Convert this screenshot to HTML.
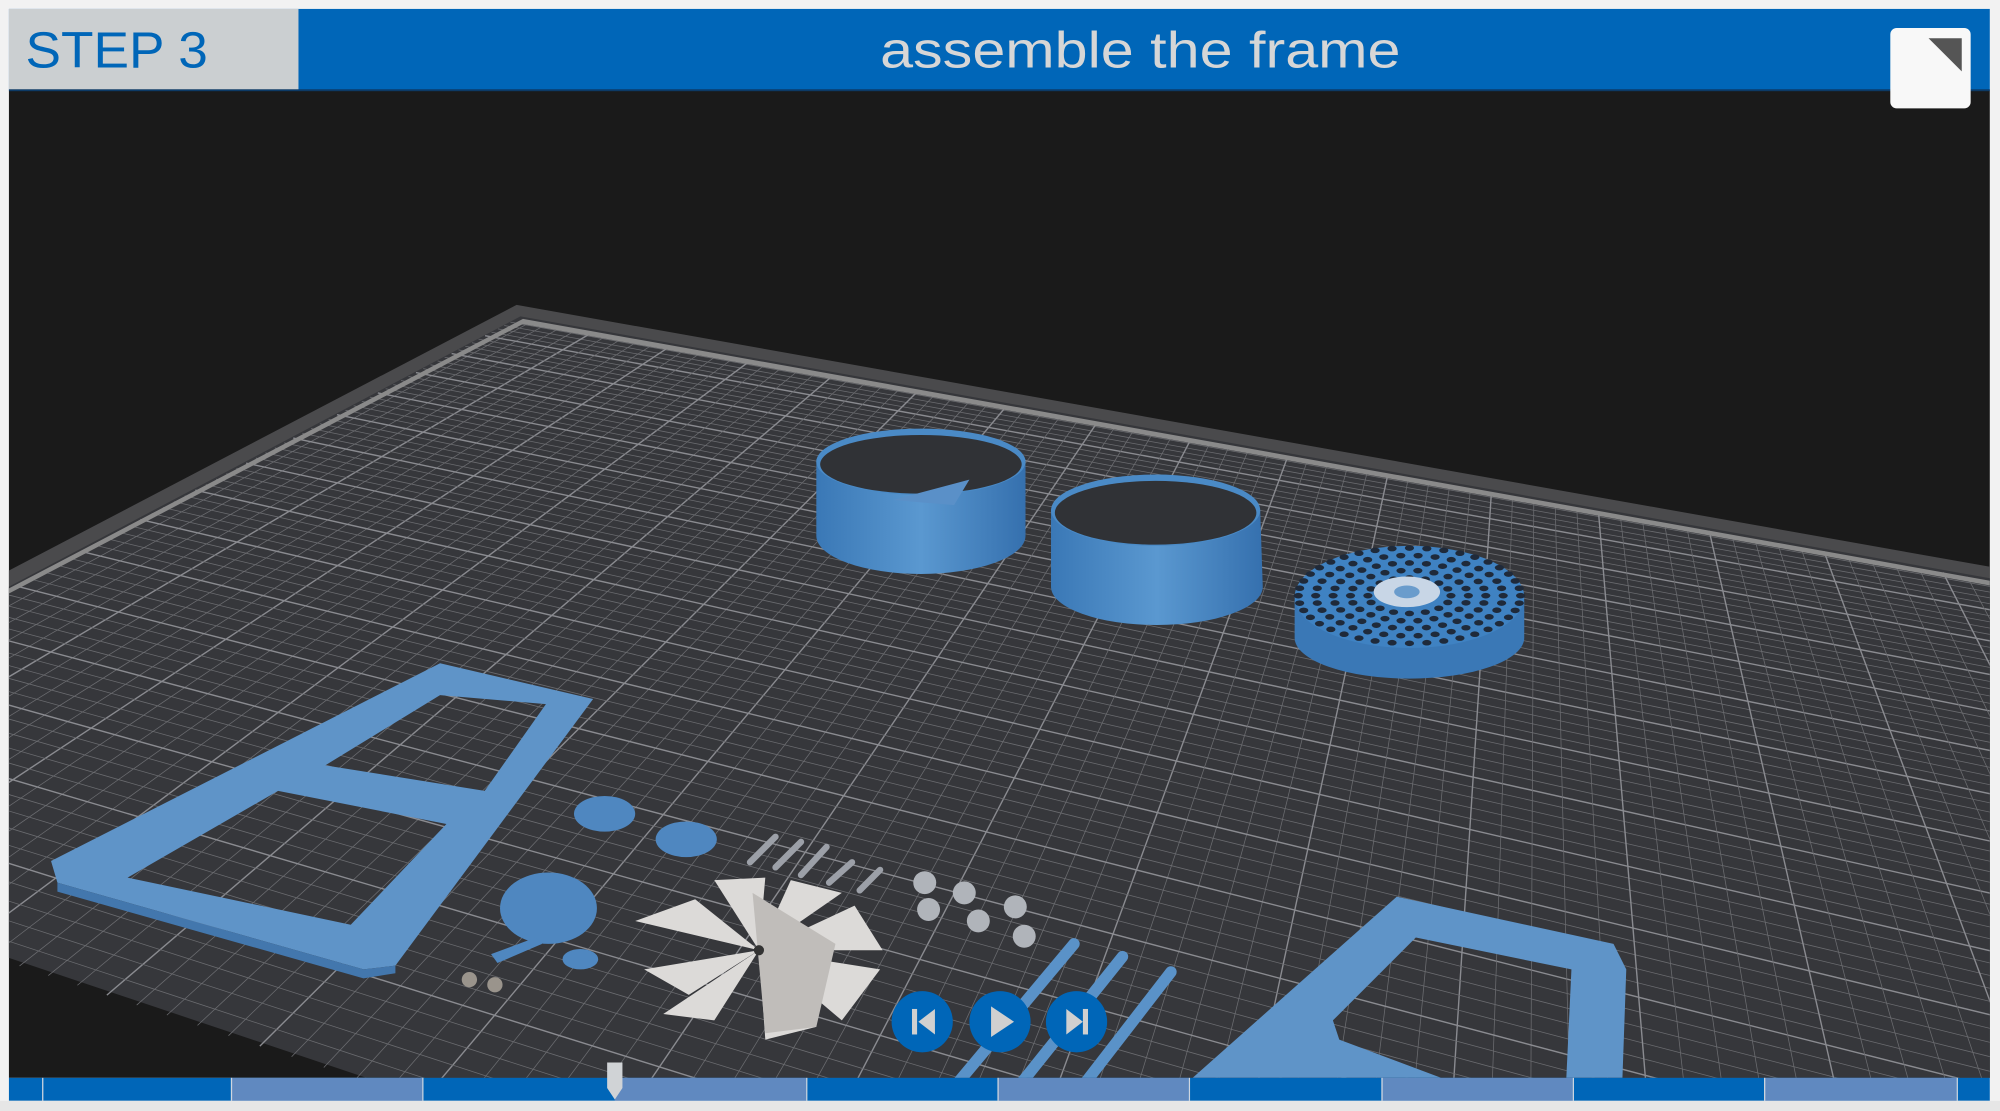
<!DOCTYPE html>
<html><head><meta charset="utf-8"><style>
html,body{margin:0;padding:0;background:#f2f2f2;width:2000px;height:1111px;overflow:hidden;position:relative}
svg{position:absolute;left:0;top:0;display:block}
.t{font-family:"Liberation Sans",sans-serif}
</style></head><body>
<svg id="s" width="2000" height="1111" viewBox="0 0 1568 871" preserveAspectRatio="none">
<defs>
<clipPath id="vp"><rect x="7" y="71" width="1553" height="774"/></clipPath>
<linearGradient id="rg" x1="0" x2="1"><stop offset="0" stop-color="#3a78b6"/><stop offset=".5" stop-color="#5a98d0"/><stop offset="1" stop-color="#3570ae"/></linearGradient>
</defs>
<rect x="0" y="0" width="1568" height="871" fill="#f2f2f2"/>
<rect x="7" y="71" width="1553" height="774" fill="#1a1a1a"/>
<g clip-path="url(#vp)">
<polygon points="405,239 1620,455 2300,1500 -342,630" fill="#4a4a4c"/>
<polygon points="408,248 1620,464 2300,1520 -330,638" fill="#36373b"/>
<g id="grid" stroke="#6b6c70" stroke-width="0.6" fill="none"></g>
<polygon points="410,250 1620,466 1622,470 410,254 -330,642 -330,638" fill="#8a8a8a"/>
<g>
<path d="M640,360 L640,420 A82,30 0 0 0 804,420 L804,360 Z" fill="url(#rg)"/>
<ellipse cx="722" cy="362" rx="82" ry="26" fill="#4a8ac6"/>
<ellipse cx="722" cy="364" rx="79" ry="23" fill="#303236"/>
<path d="M700,392 L760,376 L748,396 Z" fill="#5a90c8"/>
<path d="M824,400 L824,460 A83,30 0 0 0 990,460 L988,400 Z" fill="url(#rg)"/>
<ellipse cx="906" cy="400" rx="82" ry="28" fill="#4a8ac6"/>
<ellipse cx="906" cy="402" rx="79" ry="25" fill="#303236"/>
<path d="M1015,470 L1015,500 A90,32 0 0 0 1195,500 L1195,470 Z" fill="#3a78b6"/>
<ellipse cx="1105" cy="468" rx="90" ry="40" fill="#3f82c2"/>
<g id="holes" fill="#1f2a3a"></g>
<ellipse cx="1103" cy="464" rx="26" ry="12" fill="#c8d6e6"/>
<ellipse cx="1103" cy="464" rx="10" ry="5" fill="#6a9ccc"/>
</g>
<path fill-rule="evenodd" fill="#5f94c8" d="M40,675 L345,520 L465,548 L310,757 L285,760 L45,692 Z M100,688 L218,620 L350,646 L275,725 Z M255,600 L345,545 L428,552 L380,620 Z"/>
<path fill="#4377ad" d="M45,692 L285,760 L310,757 L310,763 L285,767 L45,699 Z"/>
<path fill-rule="evenodd" fill="#5f94c8" d="M935,845 L1095,703 L1265,740 L1275,760 L1272,845 Z M1045,800 L1110,735 L1232,760 L1228,845 L1130,845 L1050,815 Z"/>
<ellipse cx="430" cy="712" rx="38" ry="28" fill="#4f87c0"/>
<ellipse cx="474" cy="638" rx="24" ry="14" fill="#4f87c0"/>
<ellipse cx="538" cy="658" rx="24" ry="14" fill="#4f87c0"/>
<ellipse cx="455" cy="752" rx="14" ry="8" fill="#4f87c0"/>
<path d="M385,748 L420,735 L425,740 L390,755Z" fill="#4f87c0"/>
<circle cx="368" cy="768" r="6" fill="#9a948c"/><circle cx="388" cy="772" r="6" fill="#9a948c"/>
<g stroke="#9ca0a8" stroke-width="5" stroke-linecap="round">
<line x1="588" y1="676" x2="608" y2="656"/><line x1="608" y1="680" x2="628" y2="660"/><line x1="628" y1="686" x2="648" y2="664"/><line x1="650" y1="692" x2="668" y2="676"/><line x1="674" y1="698" x2="690" y2="682"/>
</g>
<g fill="#b0b4ba">
<circle cx="725" cy="692" r="9"/><circle cx="756" cy="700" r="9"/><circle cx="728" cy="713" r="9"/><circle cx="767" cy="722" r="9"/><circle cx="796" cy="711" r="9"/><circle cx="803" cy="734" r="9"/>
</g>
<g stroke="#5a92c8" stroke-width="9" stroke-linecap="round">
<line x1="750" y1="850" x2="842" y2="740"/><line x1="800" y1="850" x2="880" y2="750"/><line x1="850" y1="850" x2="918" y2="762"/>
</g>
<g fill="#dcdad8">
<path d="M595,745 L498,722 L545,705Z"/>
<path d="M595,745 L505,760 L540,780Z"/>
<path d="M595,745 L520,795 L560,800Z"/>
<path d="M595,745 L560,690 L600,688Z"/>
<path d="M595,745 L620,690 L660,700Z"/>
<path d="M595,745 L670,710 L692,745Z"/>
<path d="M595,745 L690,760 L660,800Z"/>
<path d="M595,745 L640,805 L600,815Z"/>
</g>
<path d="M590,700 L600,810 L640,805 L655,740 Z" fill="#c0bdba"/>
<circle cx="595" cy="745" r="4" fill="#333"/>
</g>
<rect x="7" y="7" width="1553" height="64" fill="#0066b8"/>
<rect x="7" y="7" width="227" height="64" fill="#cbcfd1"/>
<rect x="7" y="70" width="1553" height="1.5" fill="#0c3a66"/>
<text x="20" y="53" class="t" font-size="40" fill="#0066b8" textLength="143" lengthAdjust="spacingAndGlyphs">STEP 3</text>
<text x="894" y="53" class="t" font-size="40" fill="#d6d6d6" text-anchor="middle" textLength="408" lengthAdjust="spacingAndGlyphs">assemble the frame</text>
<rect x="1482" y="22" width="63" height="63" rx="5" fill="#f8f8f8"/>
<path d="M1512,30 L1538,30 L1538,56 Z" fill="#555"/>
<g fill="#0066b8"><ellipse cx="723" cy="801" rx="24" ry="24"/><ellipse cx="784" cy="801" rx="24" ry="24"/><ellipse cx="844" cy="801" rx="24" ry="24"/></g>
<g fill="#d0d0d0">
<rect x="715" y="791" width="4" height="20"/><path d="M733,791 L733,811 L720,801Z"/>
<path d="M777,789 L777,813 L795,801Z"/>
<rect x="849" y="791" width="4" height="20"/><path d="M836,791 L836,811 L849,801Z"/>
</g>
<g>
<rect x="7" y="845" width="1553" height="18" fill="#0066b8"/>
<g fill="#6089c0">
<rect x="181" y="845" width="150" height="18"/><rect x="482" y="845" width="150" height="18"/><rect x="782" y="845" width="150" height="18"/><rect x="1083" y="845" width="150" height="18"/><rect x="1383" y="845" width="151" height="18"/>
</g>
<g fill="#cfd6e0">
<rect x="33" y="845" width="1" height="18"/><rect x="181" y="845" width="1" height="18"/><rect x="331" y="845" width="1" height="18"/><rect x="632" y="845" width="1" height="18"/><rect x="782" y="845" width="1" height="18"/><rect x="932" y="845" width="1" height="18"/><rect x="1083" y="845" width="1" height="18"/><rect x="1233" y="845" width="1" height="18"/><rect x="1383" y="845" width="1" height="18"/><rect x="1534" y="845" width="1" height="18"/>
</g>
<path d="M476,833 L488,833 L488,853 L482,862 L476,853 Z" fill="#d0d3d6"/>
</g>
<rect x="0" y="863" width="1568" height="8" fill="#e6e6e6"/>
</svg>
<script>
(function(){
var NS="http://www.w3.org/2000/svg";
var P=[[405,250],[1620,466],[2300,1520],[-330,642]];
function H(u,v){
 var x0=P[0][0],y0=P[0][1],x1=P[1][0],y1=P[1][1],x2=P[2][0],y2=P[2][1],x3=P[3][0],y3=P[3][1];
 var dx1=x1-x2,dx2=x3-x2,dy1=y1-y2,dy2=y3-y2,sx=x0-x1+x2-x3,sy=y0-y1+y2-y3;
 var den=dx1*dy2-dx2*dy1;
 var g=(sx*dy2-dx2*sy)/den,h=(dx1*sy-sx*dy1)/den;
 var a=x1-x0+g*x1,b=x3-x0+h*x3,c=x0,d=y1-y0+g*y1,e=y3-y0+h*y3,f=y0;
 var w=g*u+h*v+1;return [(a*u+b*v+c)/w,(d*u+e*v+f)/w];
}
var gr=document.getElementById('grid');
var N=80;
for(var i=1;i<N;i++){
 var t=i/N;
 [[H(t,0),H(t,1)],[H(0,t),H(1,t)]].forEach(function(s){
  var l=document.createElementNS(NS,'line');
  l.setAttribute('x1',s[0][0]);l.setAttribute('y1',s[0][1]);l.setAttribute('x2',s[1][0]);l.setAttribute('y2',s[1][1]);
  if(i%5==0){l.setAttribute('stroke','#8a8b90');l.setAttribute('stroke-width','1.1');}
  gr.appendChild(l);
 });
}
var ho=document.getElementById('holes');
for(var r=1;r<=5;r++){
 var rr=18+r*13,n=10+r*6;
 for(var k=0;k<n;k++){
  var a=2*Math.PI*k/n;
  var c=document.createElementNS(NS,'ellipse');
  c.setAttribute('cx',1105+Math.cos(a)*rr*1.05);c.setAttribute('cy',467+Math.sin(a)*rr*0.45);
  c.setAttribute('rx',3.6);c.setAttribute('ry',2.2);ho.appendChild(c);
 }
}
})();
</script>
</body></html>
